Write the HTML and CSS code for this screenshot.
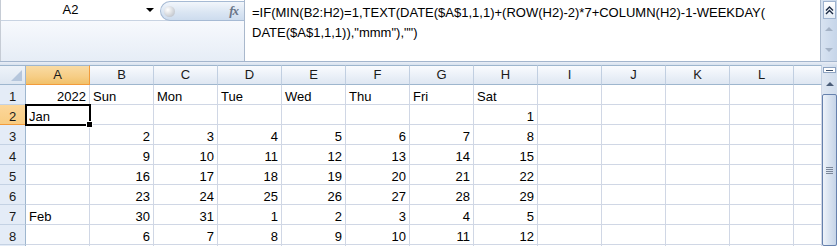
FILE: index.html
```html
<!DOCTYPE html>
<html>
<head>
<meta charset="utf-8">
<link rel="stylesheet" href="styles.css">
</head>
<body>
<div class="app">
  <div class="fbar">
    <div class="fleft">
      <div class="nrow">
        <div class="namebox">A2</div>
        <div class="dd"><span class="tri"></span></div>
        <div class="fxcap"><span class="knob"></span><span class="fx">fx</span></div>
      </div>
      <div class="ffill"></div>
    </div>
    <div class="formula">=IF(MIN(B2:H2)=1,TEXT(DATE($A$1,1,1)+(ROW(H2)-2)*7+COLUMN(H2)-1-WEEKDAY(<br>DATE($A$1,1,1)),"mmm"),"")</div>
    <div class="fscroll">
      <div class="fbtn"><svg width="9" height="9" viewBox="0 0 9 9"><path d="M1 4.5 L4.5 1 L8 4.5 M1 8 L4.5 4.5 L8 8" fill="none" stroke="#1b2a44" stroke-width="1.4"/></svg></div>
      <div class="farrow up"></div>
      <div class="farrow down"></div>
    </div>
  </div>
  <div class="sep"></div>
  <div class="sheet">
    <div class="grid">
      <div class="corner"><span class="ctri"></span></div>
      <div class="ch sel">A</div><div class="ch">B</div><div class="ch">C</div><div class="ch">D</div><div class="ch">E</div><div class="ch">F</div><div class="ch">G</div><div class="ch">H</div><div class="ch">I</div><div class="ch">J</div><div class="ch">K</div><div class="ch">L</div><div class="ch"></div>

      <div class="rh">1</div>
      <div class="c r">2022</div><div class="c">Sun</div><div class="c">Mon</div><div class="c">Tue</div><div class="c">Wed</div><div class="c">Thu</div><div class="c">Fri</div><div class="c">Sat</div><div class="c"></div><div class="c"></div><div class="c"></div><div class="c"></div><div class="c"></div>

      <div class="rh rsel">2</div>
      <div class="c active">Jan<span class="handle"></span></div><div class="c"></div><div class="c"></div><div class="c"></div><div class="c"></div><div class="c"></div><div class="c"></div><div class="c r">1</div><div class="c"></div><div class="c"></div><div class="c"></div><div class="c"></div><div class="c"></div>

      <div class="rh">3</div>
      <div class="c"></div><div class="c r">2</div><div class="c r">3</div><div class="c r">4</div><div class="c r">5</div><div class="c r">6</div><div class="c r">7</div><div class="c r">8</div><div class="c"></div><div class="c"></div><div class="c"></div><div class="c"></div><div class="c"></div>

      <div class="rh">4</div>
      <div class="c"></div><div class="c r">9</div><div class="c r">10</div><div class="c r">11</div><div class="c r">12</div><div class="c r">13</div><div class="c r">14</div><div class="c r">15</div><div class="c"></div><div class="c"></div><div class="c"></div><div class="c"></div><div class="c"></div>

      <div class="rh">5</div>
      <div class="c"></div><div class="c r">16</div><div class="c r">17</div><div class="c r">18</div><div class="c r">19</div><div class="c r">20</div><div class="c r">21</div><div class="c r">22</div><div class="c"></div><div class="c"></div><div class="c"></div><div class="c"></div><div class="c"></div>

      <div class="rh">6</div>
      <div class="c"></div><div class="c r">23</div><div class="c r">24</div><div class="c r">25</div><div class="c r">26</div><div class="c r">27</div><div class="c r">28</div><div class="c r">29</div><div class="c"></div><div class="c"></div><div class="c"></div><div class="c"></div><div class="c"></div>

      <div class="rh">7</div>
      <div class="c">Feb</div><div class="c r">30</div><div class="c r">31</div><div class="c r">1</div><div class="c r">2</div><div class="c r">3</div><div class="c r">4</div><div class="c r">5</div><div class="c"></div><div class="c"></div><div class="c"></div><div class="c"></div><div class="c"></div>

      <div class="rh">8</div>
      <div class="c"></div><div class="c r">6</div><div class="c r">7</div><div class="c r">8</div><div class="c r">9</div><div class="c r">10</div><div class="c r">11</div><div class="c r">12</div><div class="c"></div><div class="c"></div><div class="c"></div><div class="c"></div><div class="c"></div>

      <div class="rh"></div>
      <div class="c"></div><div class="c"></div><div class="c"></div><div class="c"></div><div class="c"></div><div class="c"></div><div class="c"></div><div class="c"></div><div class="c"></div><div class="c"></div><div class="c"></div><div class="c"></div><div class="c"></div>
    </div>
    <div class="vscroll">
      <div class="split"><span></span></div>
      <div class="varrow"></div>
      <div class="thumb"><span class="grip"></span></div>
    </div>
  </div>
</div>
</body>
</html>
```

FILE: styles.css
```css
html, body {
  margin: 0;
  padding: 0;
  background: #fff;
}
.app {
  width: 837px;
  height: 246px;
  overflow: hidden;
  font-family: "Liberation Sans", Arial, sans-serif;
  font-size: 13px;
  color: #000;
}
.fbar {
  display: flex;
  height: 61px;
  border-bottom: 1px solid #a3b5cd;
}
.fleft {
  width: 244px;
  display: flex;
  flex-direction: column;
  border-left: 1px solid #c6ccd5;
  box-sizing: border-box;
}
.nrow {
  display: flex;
  height: 21px;
  background: #fff;
  border-bottom: 1px solid #c8d3e2;
  box-sizing: border-box;
}
.namebox {
  width: 139px;
  text-align: center;
  line-height: 20px;
  font-size: 13px;
}
.dd {
  width: 20px;
  display: flex;
  align-items: center;
  justify-content: center;
}
.tri {
  width: 0;
  height: 0;
  border-left: 4px solid transparent;
  border-right: 4px solid transparent;
  border-top: 4px solid #000;
}
.fxcap {
  flex: 1;
  margin-top: 1px;
  height: 18px;
  border: 1px solid #a6bad4;
  border-right: none;
  border-radius: 10px 0 0 10px;
  background: linear-gradient(#f2f6fb, #dbe6f3 55%, #cddcee);
  display: flex;
  align-items: center;
  justify-content: space-between;
  padding: 0 4px 0 3px;
  box-sizing: content-box;
}
.knob {
  width: 11px;
  height: 11px;
  border-radius: 50%;
  background: radial-gradient(circle at 35% 35%, #ffffff, #c8ccd2 70%, #a9afb8);
}
.fx {
  font-family: "Liberation Serif", "Times New Roman", serif;
  font-style: italic;
  font-weight: bold;
  font-size: 13px;
  color: #6a7588;
  letter-spacing: -1px;
  padding-right: 2px;
}
.ffill {
  flex: 1;
  background: linear-gradient(#f7f9fd, #e6edf6);
}
.formula {
  width: 577px;
  box-sizing: border-box;
  border-left: 1px solid #a9b8cc;
  border-right: 1px solid #a9b8cc;
  padding: 3px 0 0 7px;
  line-height: 20px;
  white-space: nowrap;
  background: #fff;
}
.fscroll {
  flex: 1;
  background: linear-gradient(90deg, #d8e3f1, #c6d5e9);
  display: flex;
  flex-direction: column;
  align-items: center;
}
.fbtn {
  margin-top: 1px;
  width: 13px;
  height: 18px;
  box-sizing: border-box;
  border: 1px solid #9fb3cf;
  background: linear-gradient(#ffffff, #e4ecf6);
  display: flex;
  align-items: center;
  justify-content: center;
}
.farrow {
  width: 0;
  height: 0;
  border-left: 4px solid transparent;
  border-right: 4px solid transparent;
}
.farrow.up {
  margin-top: 8px;
  border-bottom: 4px solid #a4b2c5;
}
.farrow.down {
  margin-top: 17px;
  border-top: 4px solid #a4b2c5;
}
.sep {
  height: 3px;
  background: linear-gradient(#e9eef6, #d7e1ee);
}
.sheet {
  display: flex;
  height: 181px;
  overflow: hidden;
}
.grid {
  display: grid;
  grid-template-columns: 26px repeat(12, 64px) 28px;
  grid-auto-rows: 20px;
  width: 822px;
  overflow: hidden;
}
.corner, .ch {
  box-sizing: border-box;
  height: 20px;
  border-top: 1px solid #9eb6ce;
  border-bottom: 1px solid #9eb6ce;
  border-right: 1px solid #c1cfe1;
  background: linear-gradient(#f9fbfe, #e9eff7 60%, #dfe7f2);
  text-align: center;
  line-height: 18px;
  color: #1a1a1a;
}
.corner {
  border-right: 1px solid #9eb6ce;
  background: linear-gradient(#eef3f9, #dde6f1);
  position: relative;
  padding: 2px;
}
.ctri {
  position: absolute;
  right: 3px;
  bottom: 3px;
  width: 0;
  height: 0;
  border-left: 11px solid transparent;
  border-bottom: 11px solid #b5c6dc;
}
.ch.sel {
  background: linear-gradient(#f9dba4, #f6cd85 60%, #f1c16a);
  border-right: 1px solid #f29b3b;
  border-bottom: 1px solid #f29b3b;
}
.rh {
  box-sizing: border-box;
  border-right: 1px solid #9eb6ce;
  border-bottom: 1px solid #c4d2e4;
  background: #e4ecf7;
  text-align: center;
  padding-top: 3px;
  line-height: 17px;
  height: 20px;
  overflow: hidden;
  color: #1a1a1a;
}
.rh.rsel {
  background: linear-gradient(#fcd79a, #f8cc82);
  border-bottom: 1px solid #f29b3b;
  border-right: 1px solid #f29b3b;
}
.c {
  box-sizing: border-box;
  height: 20px;
  border-right: 1px solid #d0d7e5;
  border-bottom: 1px solid #d0d7e5;
  padding: 3px 3px 0 3px;
  line-height: 17px;
  white-space: nowrap;
  overflow: hidden;
}
.c.r {
  text-align: right;
}
.c.active {
  position: relative;
  overflow: visible;
  outline: 2px solid #000;
  outline-offset: -1px;
  z-index: 1;
}
.handle {
  position: absolute;
  right: -3px;
  bottom: -3px;
  width: 5px;
  height: 5px;
  background: #000;
  border: 1px solid #fff;
  box-sizing: content-box;
  margin: -1px;
}
.vscroll {
  flex: 1;
  background: linear-gradient(90deg, #dfe7f2, #cfdcec);
  display: flex;
  flex-direction: column;
  align-items: center;
}
.split {
  margin-top: 2px;
  width: 13px;
  height: 6px;
  box-sizing: border-box;
  border: 1px solid #8ea4c2;
  background: #fff;
  display: flex;
  align-items: center;
  justify-content: center;
}
.split span {
  width: 7px;
  height: 1px;
  background: #3b4f6b;
}
.varrow {
  margin-top: 9px;
  width: 0;
  height: 0;
  border-left: 4px solid transparent;
  border-right: 4px solid transparent;
  border-bottom: 4px solid #4a5d78;
}
.thumb {
  margin-top: 8px;
  width: 15px;
  height: 152px;
  box-sizing: border-box;
  border: 1px solid #6681ad;
  border-radius: 2px;
  background: linear-gradient(90deg, #eef3fa, #dae4f1 45%, #c5d4e8);
  display: flex;
  align-items: center;
  justify-content: center;
}
.grip {
  width: 7px;
  height: 7px;
  background: repeating-linear-gradient(#7a8699 0 1px, transparent 1px 2px);
}
```
